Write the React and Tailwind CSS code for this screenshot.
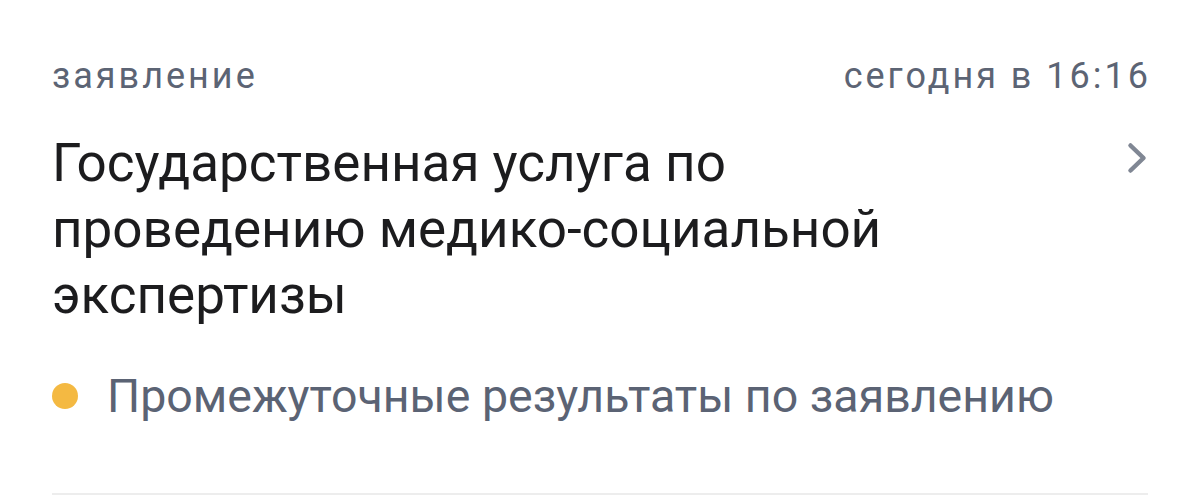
import React from 'react';

export default function App() {
  return (
    <div className="w-[1200px] h-[495px] bg-white overflow-hidden" style={{ fontFamily: 'Roboto, "Noto Sans", sans-serif' }}>
      <div className="mx-[52px] pt-[52px] h-[495px] flex flex-col border-b-2 border-[#ededed] box-border">
        {/* meta row */}
        <div className="flex items-center justify-between text-[36px] leading-[48px] tracking-[3px] text-[#5c6474]">
          <span>заявление</span>
          <span className="mr-[-3px]">сегодня в 16:16</span>
        </div>

        {/* title */}
        <div className="flex items-start justify-between mt-[30px]">
          <h2 className="text-[53px] leading-[66px] text-[#1c1c1e] font-normal max-w-[960px]">
            Государственная услуга по проведению медико-социальной экспертизы
          </h2>
          <svg width="26" height="36" viewBox="0 0 26 36" className="mt-[10px] mr-[-3px]" fill="none">
            <path d="M5.5 5.5L18.5 18L5.5 30.5" stroke="#808794" strokeWidth="4.5" strokeLinecap="round" strokeLinejoin="round" />
          </svg>
        </div>

        {/* status */}
        <div className="flex items-center mt-[38px]">
          <span className="w-[26px] h-[26px] rounded-full bg-[#f4b942] shrink-0" />
          <span className="ml-[29px] text-[46.5px] leading-[60px] text-[#5b6374]">
            Промежуточные результаты по заявлению
          </span>
        </div>
      </div>
    </div>
  );
}
